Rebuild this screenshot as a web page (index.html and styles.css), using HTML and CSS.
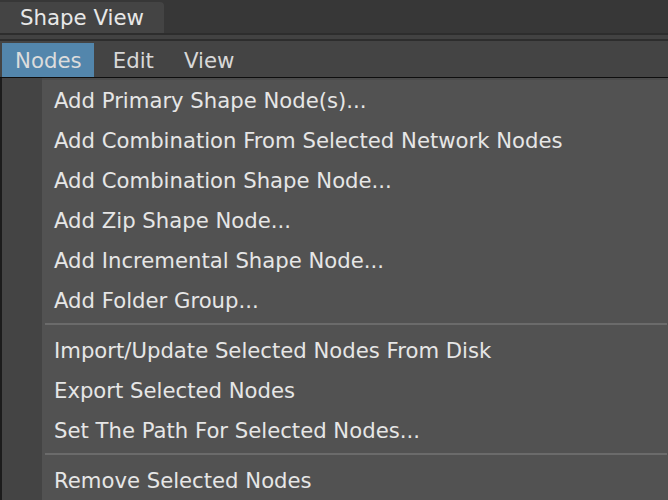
FILE: index.html
```html
<!DOCTYPE html>
<html>
<head>
<meta charset="utf-8">
<link rel="stylesheet" href="styles.css">
</head>
<body>
<div class="tabbar">
  <div class="tab">Shape View</div>
</div>
<div class="tabsep"></div>
<div class="menubar">
  <div class="mitem active">Nodes</div>
  <div class="mitem">Edit</div>
  <div class="mitem">View</div>
</div>
<div class="content">
  <div class="gutter"></div>
  <div class="menu">
    <div class="row">Add Primary Shape Node(s)...</div>
    <div class="row">Add Combination From Selected Network Nodes</div>
    <div class="row">Add Combination Shape Node...</div>
    <div class="row">Add Zip Shape Node...</div>
    <div class="row">Add Incremental Shape Node...</div>
    <div class="row">Add Folder Group...</div>
    <div class="sep"></div>
    <div class="row">Import/Update Selected Nodes From Disk</div>
    <div class="row">Export Selected Nodes</div>
    <div class="row">Set The Path For Selected Nodes...</div>
    <div class="sep"></div>
    <div class="row">Remove Selected Nodes</div>
  </div>
</div>
</body>
</html>
```

FILE: styles.css
```css
html, body {
  margin: 0;
  padding: 0;
  height: 100%;
  overflow: hidden;
}
body {
  background: #373737;
  font-family: "DejaVu Sans", "Liberation Sans", sans-serif;
  color: #e4e4e4;
}
.tabbar {
  height: 31px;
  padding-top: 2px;
  display: flex;
}
.tab {
  width: 144px;
  padding-left: 20px;
  background: #444444;
  border-top-right-radius: 4px;
  font-size: 21.3px;
  line-height: 32px;
  color: #e8e8e8;
}
.tabsep {
  height: 4px;
  border-top: 2px solid #2d2d2d;
  border-bottom: 2px solid #2d2d2d;
  background: #424242;
}
.menubar {
  height: 34px;
  padding: 2px 0 0 2px;
  background: #444444;
  display: flex;
  border-bottom: 1px solid #0e0e0e;
}
.mitem {
  font-size: 21.3px;
  line-height: 35px;
  padding: 0 15px;
  color: #d8d8d8;
}
.mitem.active {
  background: #5386ac;
  padding: 0 12px 0 13px;
  margin-right: 4px;
  color: #dcdcdc;
}
.content {
  display: flex;
  height: 430px;
}
.gutter {
  width: 40px;
  background: #444444;
  border-left: 2px solid #1c1c1c;
}
.menu {
  flex: 1;
  background: #525252;
  padding-top: 1px;
  border-top: 2px solid #4b4b4b;
}
.row {
  height: 40px;
  line-height: 40px;
  padding-left: 12px;
  font-size: 21.2px;
  color: #e6e6e6;
  white-space: nowrap;
}
.sep {
  height: 2px;
  background: #6b6b6b;
  margin: 2px 1px 6px 3px;
}
```
